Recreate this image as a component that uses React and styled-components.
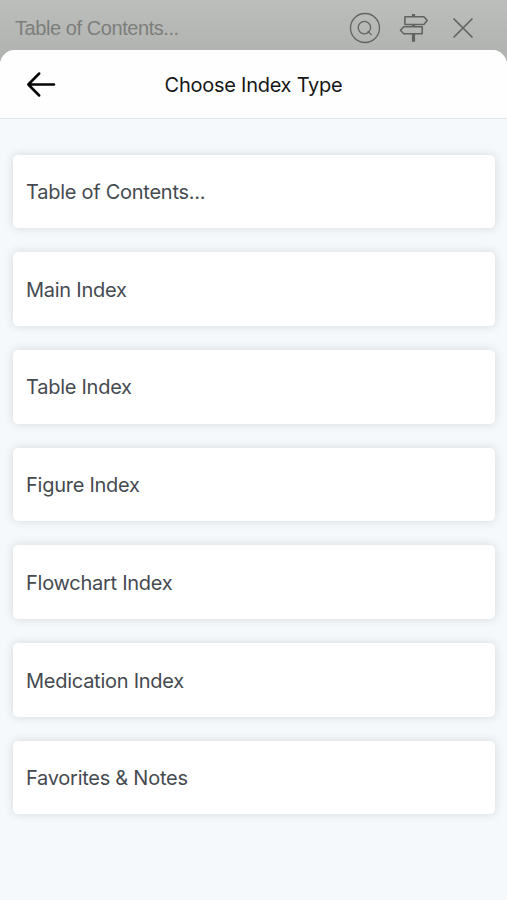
import React from 'react'
import styled, {createGlobalStyle} from 'styled-components'

const GlobalStyle = createGlobalStyle`
* {
  box-sizing: border-box;
}
body {
  margin: 0;
  font-family: Inter, "Liberation Sans", sans-serif;
}
`
const Page = styled.div`
display: flex;
flex-direction: column;
height: 900px;
overflow: hidden;
background: linear-gradient(#bcbebb, #b2b4b1 50px, #b2b4b1);
`
const TopBar = styled.div`
display: flex;
flex: none;
align-items: center;
justify-content: space-between;
height: 50px;
padding: 6px 33px 0 15px;
color: #626462;
`
const TopTitle = styled.span`
padding-top: 1px;
font-family: "Liberation Sans", Arial, sans-serif;
font-size: 20px;
letter-spacing: -0.43px;
color: #7c7e7b;
`
const TopIcons = styled.div`
display: flex;
align-items: center;
`
const Icon = styled.svg`
display: block;
margin-right: ${props => props.$gap || 0};
fill: none;
stroke: ${props => props.$color || 'currentColor'};
stroke-width: ${props => props.$weight};
stroke-linecap: round;
stroke-linejoin: round;
`
const Sheet = styled.div`
display: flex;
flex: 1;
flex-direction: column;
overflow: hidden;
background: #f5f9fc;
border-radius: 15px 15px 0 0;
`
const SheetHeader = styled.header`
display: grid;
flex: none;
grid-template-columns: 60px 1fr 60px;
align-items: center;
height: 69px;
background: #fefefe;
border-bottom: 1px solid #e2e5e8;
`
const BackButton = styled.button`
padding: 0 0 0 26px;
border: 0;
background: none;
`
const Title = styled.h1`
margin: 0;
padding-top: 2px;
font-size: 20px;
font-weight: 400;
letter-spacing: -0.26px;
text-align: center;
color: #161616;
`
const List = styled.div`
display: flex;
flex-direction: column;
gap: 24px;
padding: 35.5px 12px 0 13px;
`
const Row = styled.div`
display: flex;
align-items: center;
height: 73.7px;
padding: 1.5px 13px 0;
border-radius: 5px;
background: #fff;
box-shadow: 0 0 10px rgba(50, 50, 50, 0.16);
font-size: 20px;
letter-spacing: -0.26px;
color: #454a50;
`

const items = [
  'Table of Contents...',
  'Main Index',
  'Table Index',
  'Figure Index',
  'Flowchart Index',
  'Medication Index',
  'Favorites & Notes',
]

const SearchIcon = () => (
  <Icon width="32" height="32" viewBox="0 0 32 32" $weight="1.3" $gap="18px">
    <circle cx="16" cy="16" r="14.5" />
    <circle cx="15.4" cy="15.6" r="6.2" />
    <path d="M19 19.4l3.2 3.2" />
  </Icon>
)

const SignIcon = () => (
  <Icon width="30" height="32" viewBox="0 0 30 32" $weight="1.6" $gap="23px">
    <path d="M5.9 4.7h19l3.3 3.9-3.3 3.9h-19z" />
    <path d="M23.2 14.7H4.8l-3.4 3.5 3.4 3.5h18.4z" />
    <path d="M14.5 2v2.5M14.5 12.6v2M14.5 22v7.8" strokeWidth="3.2" strokeLinecap="butt" />
  </Icon>
)

const CloseIcon = () => (
  <Icon width="22" height="22" viewBox="0 0 22 22" $weight="1.7">
    <path d="M2 2l18 18M20 2L2 20" />
  </Icon>
)

const BackIcon = () => (
  <Icon width="30" height="28" viewBox="0 0 30 28" $weight="2.5" $color="#050505">
    <path d="M28 14.5H2.3M13.2 3.5L2.3 14.5l10.9 11" />
  </Icon>
)

const App = () => {
    return(
        <>
        <GlobalStyle />
        <Page>
            <TopBar>
                <TopTitle>Table of Contents...</TopTitle>
                <TopIcons>
                    <SearchIcon />
                    <SignIcon />
                    <CloseIcon />
                </TopIcons>
            </TopBar>
            <Sheet>
                <SheetHeader>
                    <BackButton aria-label="Back"><BackIcon /></BackButton>
                    <Title>Choose Index Type</Title>
                </SheetHeader>
                <List>
                    {items.map(item => <Row key={item}>{item}</Row>)}
                </List>
            </Sheet>
        </Page>
        </>
    )
}

export default App
